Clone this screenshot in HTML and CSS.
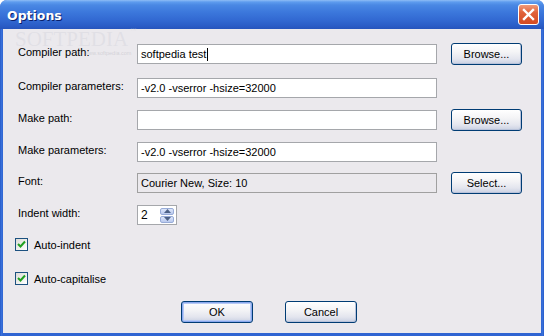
FILE: index.html
```html
<!DOCTYPE html>
<html>
<head>
<meta charset="utf-8">
<link rel="stylesheet" href="styles.css">
</head>
<body>
<div class="window">
  <div class="titlebar">
    <span class="title">Options</span>
    <span class="close"><svg width="13" height="13" viewBox="0 0 13 13"><path d="M2 2 L11 11 M11 2 L2 11" stroke="#fff" stroke-width="2.4" stroke-linecap="square"/></svg></span>
  </div>
  <div class="client">
    <div class="form">
      <div class="label">Compiler path:</div>
      <div class="field"><span>softpedia test</span><span class="caret"></span></div>
      <div class="btn">Browse...</div>

      <div class="label">Compiler parameters:</div>
      <div class="field">-v2.0 -vserror -hsize=32000</div>
      <div></div>

      <div class="label">Make path:</div>
      <div class="field"></div>
      <div class="btn">Browse...</div>

      <div class="label">Make parameters:</div>
      <div class="field">-v2.0 -vserror -hsize=32000</div>
      <div></div>

      <div class="label">Font:</div>
      <div class="field readonly">Courier New, Size: 10</div>
      <div class="btn">Select...</div>

      <div class="label">Indent width:</div>
      <div class="spin">
        <span class="spin-val">2</span>
        <span class="spin-btns">
          <span class="spin-btn"><svg width="7" height="4" viewBox="0 0 7 4"><path d="M0 4 L3.5 0 L7 4 Z" fill="#4d6185"/></svg></span>
          <span class="spin-btn"><svg width="7" height="4" viewBox="0 0 7 4"><path d="M0 0 L3.5 4 L7 0 Z" fill="#4d6185"/></svg></span>
        </span>
      </div>
      <div></div>
    </div>

    <div class="checks">
      <div class="check"><span class="box"><svg width="9" height="9" viewBox="0 0 9 9"><path d="M1 4 L3.5 6.5 L8 1.5" fill="none" stroke="#21a121" stroke-width="2"/></svg></span><span>Auto-indent</span></div>
      <div class="check"><span class="box"><svg width="9" height="9" viewBox="0 0 9 9"><path d="M1 4 L3.5 6.5 L8 1.5" fill="none" stroke="#21a121" stroke-width="2"/></svg></span><span>Auto-capitalise</span></div>
    </div>

    <div class="actions">
      <div class="btn default">OK</div>
      <div class="btn">Cancel</div>
    </div>
  </div>
  <div class="wm">SOFTPEDIA<sup>™</sup></div>
  <div class="wm-url">www.softpedia.com</div>
</div>
</body>
</html>
```

FILE: styles.css
```css
* { box-sizing: border-box; }
html, body { margin: 0; padding: 0; background: #ffffff; }
body { font-family: "Liberation Sans", Arial, sans-serif; font-size: 11px; color: #000; }

.window {
  position: relative;
  width: 544px;
  height: 336px;
  background: linear-gradient(to right, #1f4fc0 0, #3b74dc 1px, #2f64d2 3px, #2f64d2 541px, #3b74dc 543px, #1f4fc0 544px);
  border-radius: 7px 7px 0 0;
  overflow: hidden;
}

.titlebar {
  height: 29px;
  display: flex;
  align-items: center;
  justify-content: space-between;
  padding: 0 5px 0 7px;
  background: linear-gradient(to bottom, #8fbdf5 0, #5e9cee 2px, #4a88e4 5px, #3c78dc 12px, #3269d2 20px, #2a5cc6 26px, #2654bc 29px);
}
.title {
  font-family: "DejaVu Sans", "Liberation Sans", sans-serif;
  font-weight: bold;
  font-size: 12.5px;
  color: #fff;
  text-shadow: 1px 1px 0 #0a1f6a;
  margin-top: 1px;
}
.close {
  width: 21px;
  height: 21px;
  border: 1px solid #fff;
  border-radius: 3px;
  background: linear-gradient(to bottom, #f09a7a 0, #e0623a 40%, #d44a22 100%);
  display: flex;
  align-items: center;
  justify-content: center;
}

.client {
  margin: 0 3px;
  height: 304px;
  background: #ebe9ed;
  display: flex;
  flex-direction: column;
}

.form {
  display: grid;
  grid-template-columns: 105px 300px 71px;
  column-gap: 14px;
  grid-template-rows: 34px 32px 32px 31px 32px 20px;
  padding: 15px 0 0 15px;
}
.label {
  height: 20px;
  line-height: 16px;
  white-space: nowrap;
}
.field {
  height: 20px;
  border: 1px solid #a5a7ab;
  background: #fff;
  padding: 0 3px;
  line-height: 18px;
  display: flex;
  align-items: center;
  white-space: nowrap;
}
.field.readonly { background: #ebe9ed; border-color: #a0a0a0; }
.caret { width: 1px; height: 13px; background: #000; margin-left: 1px; }

.btn {
  height: 22px;
  border: 1px solid #003c74;
  border-radius: 3px;
  background: linear-gradient(to bottom, #ffffff 0, #f4f4f6 40%, #e3e5ee 75%, #c9d0e2 100%);
  display: flex;
  align-items: center;
  justify-content: center;
  margin-top: -1px;
  box-shadow: inset -1px -1px 0 #b8c2da;
}
.btn.default {
  box-shadow: inset 0 0 0 1px #8aa8ee, inset 0 0 0 2px #b6c9f4;
}

.spin {
  width: 40px;
  height: 20px;
  border: 1px solid #a5a7ab;
  background: #fff;
  display: flex;
  align-items: center;
  justify-content: space-between;
  padding: 2px 2px 2px 3px;
}
.spin-val { font-size: 12px; }
.spin-btns { display: flex; flex-direction: column; gap: 1px; height: 15px; }
.spin-btn {
  width: 14px;
  height: 7px;
  border: 1px solid #98acd8;
  border-radius: 2px;
  background: linear-gradient(to bottom, #dde6fa, #b9c9ee);
  display: flex;
  align-items: center;
  justify-content: center;
}

.checks {
  padding-left: 12px;
  margin-top: 13px;
  display: flex;
  flex-direction: column;
  gap: 21px;
}
.check { display: flex; align-items: center; height: 13px; gap: 6px; }
.box {
  width: 13px;
  height: 13px;
  border: 1px solid #1c5180;
  background: linear-gradient(135deg, #dcdcd7, #ffffff);
  display: flex;
  align-items: center;
  justify-content: center;
}

.actions {
  display: flex;
  gap: 32px;
  margin-top: 16px;
  padding-left: 178px;
}
.actions .btn { width: 72px; margin-top: 0; }

.wm {
  position: absolute;
  left: 15px;
  top: 18px;
  font-family: "Liberation Serif", serif;
  font-size: 21px;
  line-height: 24px;
  letter-spacing: 0;
  color: rgba(205, 205, 215, 0.35);
  pointer-events: none;
  white-space: nowrap;
}
.wm sup { font-size: 6px; vertical-align: 14px; margin-left: 2px; }
.wm-url {
  position: absolute;
  left: 84px;
  top: 50px;
  font-size: 5.5px;
  line-height: 6px;
  color: rgba(160, 160, 170, 0.35);
  white-space: nowrap;
}
```
